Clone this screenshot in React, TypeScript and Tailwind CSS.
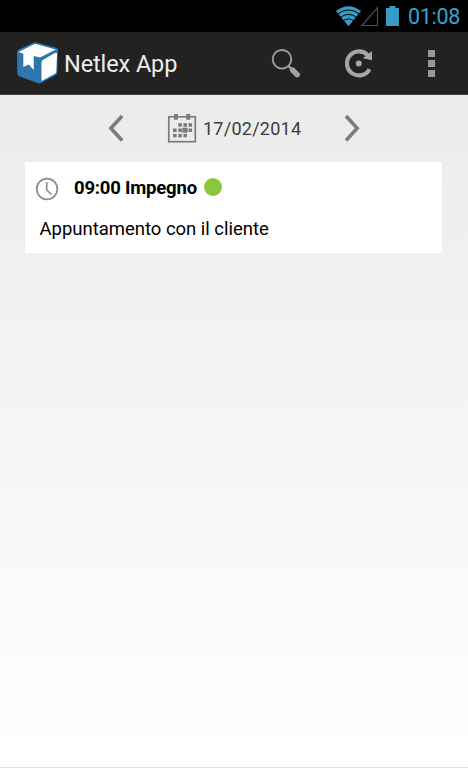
import React from "react";

function StatusBar() {
  return (
    <div className="flex h-8 items-center bg-black pl-[334px] text-[#33a5ce]">
      <svg width="68" height="32" viewBox="334 0 68 32" className="shrink-0">
        <path d="M336 11 Q348.5 1.5 361 11 L348.5 26.3 Z" fill="#379cc4" />
        <g fill="none" stroke="#000" strokeWidth="1">
          <path d="M337.5 14 Q348.5 6 359.5 14" />
          <path d="M340 17.6 Q348.5 11.2 357 17.6" />
          <path d="M343 21 Q348.5 17 354 21" />
        </g>
        <path d="M362 25.5 H377.5 V7.5 Z" fill="none" stroke="#4c4c4c" strokeWidth="1.2" />
        <path d="M386 8 H389.5 V6 H395.5 V8 H399 V26 H386 Z" fill="#379cc4" />
      </svg>
      <span className="ml-[6px] mt-[2px] text-[21.5px] leading-8 tracking-[-0.3px]">01:08</span>
    </div>
  );
}

function Logo() {
  return (
    <svg width="42" height="42" viewBox="17 43 42 42" className="shrink-0">
      <path d="M33.5 43.8 Q35 43.2 36.5 43.6 L56 48.7 Q58 49.3 58 51 L57.3 74 Q57 75.5 55.5 76.2 L41.5 83.7 Q39.5 84.6 37.5 84 L19 77.2 Q17.4 76.4 17.3 74.5 L17 53.5 Q17 51.5 18.5 50.8 Z" fill="#2f76ad" />
      <path d="M35 44.8 L55.8 50.6 L40 58.6 L33.7 57 L33.7 71 L28.7 65.6 L23.3 68 L23.3 54.7 L18.5 53 Z" fill="#fff" />
      <path d="M43.5 60.5 L55 54 Q57 53 57 55 L56.3 72.5 Q56.2 74 55 74.8 L41.5 82 L41.5 63.5 Q41.5 61.5 43.5 60.5 Z" fill="#fff" />
    </svg>
  );
}

function ActionBar() {
  return (
    <header className="flex h-[63px] items-center border-b border-[#444] bg-[#222] pl-[17px]">
      <Logo />
      <h1 className="ml-[5px] mt-[2px] w-[206px] whitespace-nowrap text-[23.5px] leading-8 tracking-[-0.1px] text-[#ededed]">Netlex App</h1>
      <svg width="32" height="32" viewBox="270 47.5 32 32" className="shrink-0">
        <circle cx="282" cy="59.8" r="9.3" fill="none" stroke="#a2a2a2" strokeWidth="1.8" />
        <path d="M288.5 66.5 L292 70" stroke="#a2a2a2" strokeWidth="2.4" />
        <path d="M292.5 70.5 L297.3 75.2" stroke="#a2a2a2" strokeWidth="5.4" strokeLinecap="round" />
      </svg>
      <svg width="32" height="32" viewBox="343 47.5 32 32" className="ml-[41px] shrink-0">
        <path d="M369.5 69.7 A12 12 0 1 1 367.5 55.5" fill="none" stroke="#a5a5a5" strokeWidth="4.2" />
        <path d="M372 51.5 V60.8 L362.8 58.8 Z" fill="#a5a5a5" />
        <circle cx="358.8" cy="64" r="3" fill="#a5a5a5" />
      </svg>
      <div className="ml-[53px] mt-px flex flex-col gap-[3px]">
        <i className="size-[7px] bg-[#999]" />
        <i className="size-[7px] bg-[#999]" />
        <i className="size-[7px] bg-[#999]" />
      </div>
    </header>
  );
}

const cells = [
  [178.3, 123.2], [183.4, 123.2], [188.5, 123.2],
  [173, 128.5], [178.3, 128.5], [188.5, 128.5],
  [173, 133.8], [178.3, 133.8], [183.4, 133.8],
];

function DateNavigator() {
  return (
    <div className="flex h-[67px] items-center pl-[108px]">
      <svg width="18" height="31" viewBox="108.5 113 18 31" className="shrink-0">
        <path d="M122.7 116 L111.3 128.3 L122.7 140.5" fill="none" stroke="#7c7c7c" strokeWidth="3.6" />
      </svg>
      <svg width="30" height="31" viewBox="167 113 30 31" className="ml-[41px] shrink-0">
        <rect x="168.8" y="116.8" width="26.5" height="24.9" fill="none" stroke="#7c7c7c" strokeWidth="1.7" />
        <path d="M174 114 h4 v5.7 h-4 Z M186.3 114 h4 v5.7 h-4 Z" fill="#7c7c7c" />
        {cells.map(([x, y]) => (
          <rect key={`${x}-${y}`} x={x} y={y} width="3.6" height="3.5" fill="#7c7c7c" />
        ))}
        <rect x="182.3" y="127.7" width="5.4" height="5" fill="#7c7c7c" />
      </svg>
      <span className="ml-[6px] mt-px w-[99px] whitespace-nowrap text-[18px] leading-6 tracking-[0.25px] text-[#3c3c3c]">17/02/2014</span>
      <svg width="18" height="31" viewBox="343 113 18 31" className="ml-[41px] shrink-0">
        <path d="M346 116 L357.2 128.3 L346 140.5" fill="none" stroke="#7c7c7c" strokeWidth="3.6" />
      </svg>
    </div>
  );
}

function Appointment() {
  return (
    <article className="ml-[25px] h-[91px] w-[417px] bg-white pl-[10px] pt-[13px] text-black">
      <div className="flex h-6 items-center">
        <svg width="24" height="24" viewBox="35 177 24 24" className="mt-[4px] shrink-0">
          <circle cx="47" cy="189" r="10.3" fill="none" stroke="#8c8c8c" strokeWidth="1.7" />
          <path d="M46.7 182 V190 L51.5 194.5" fill="none" stroke="#8c8c8c" strokeWidth="1.7" />
        </svg>
        <span className="ml-[15px] mt-px w-[130px] whitespace-nowrap text-[18.5px] font-bold leading-6 tracking-[-0.2px]">09:00 Impegno</span>
        <i className="size-[18px] rounded-full bg-[#8cc63f]" />
      </div>
      <p className="ml-[4.5px] mt-[18px] whitespace-nowrap text-[18.5px] leading-6 tracking-[-0.02px]">Appuntamento con il cliente</p>
    </article>
  );
}

export default function App() {
  return (
    <div className="flex h-[768px] w-[468px] flex-col overflow-hidden font-[Roboto,sans-serif]">
      <StatusBar />
      <ActionBar />
      <main className="flex-1 border-b border-[#ddd] bg-linear-to-b from-[#ebebeb] to-white">
        <DateNavigator />
        <Appointment />
      </main>
    </div>
  );
}
